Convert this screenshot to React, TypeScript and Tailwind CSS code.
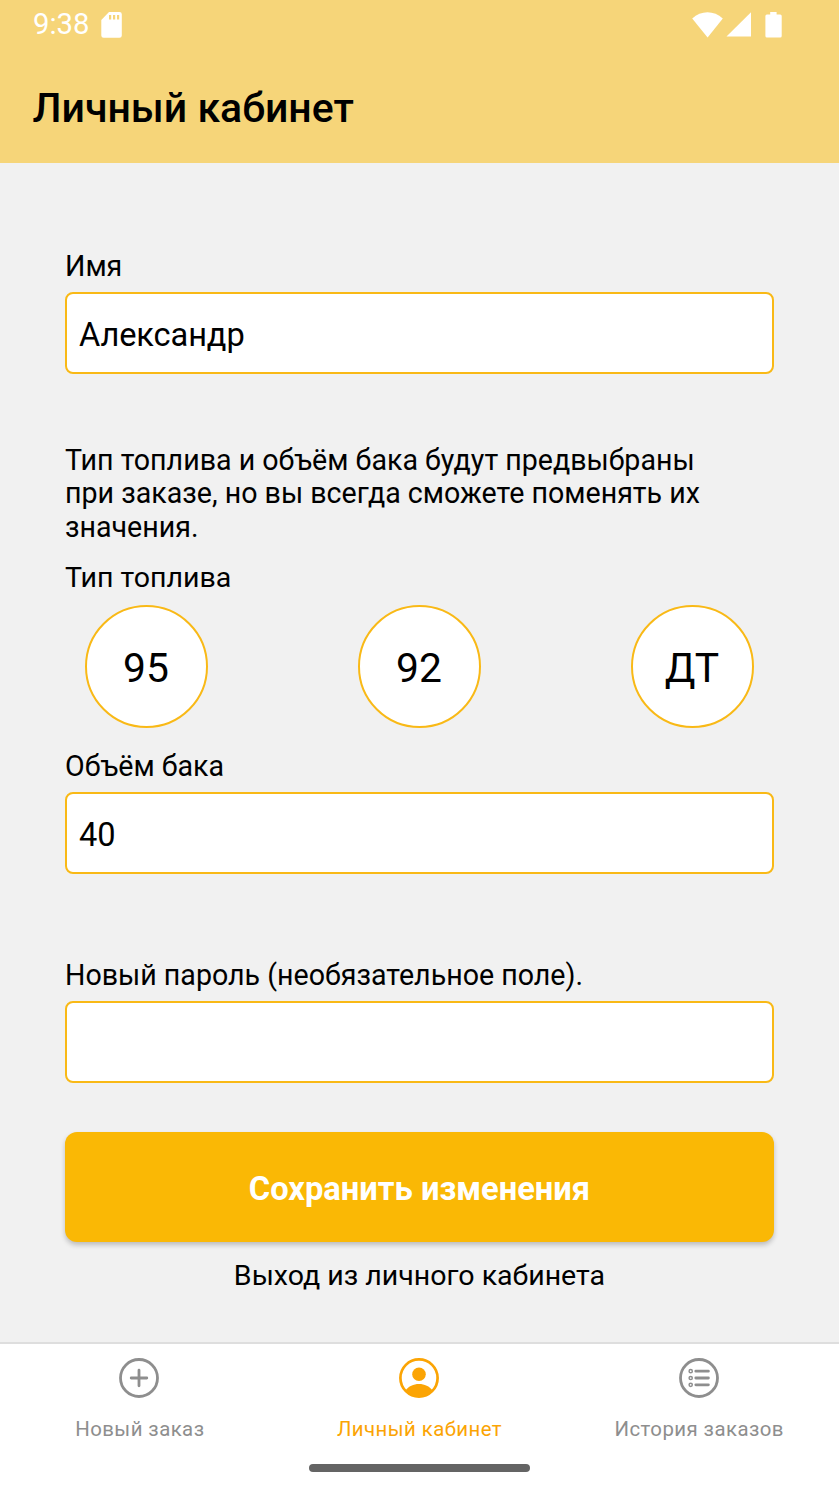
import React from "react";

const inputClass =
  "block h-[81.6px] w-full rounded-[8px] border-2 border-[#f9b916] bg-white px-[12px] pt-[4px] text-[32.6px] tracking-[-0.1px] text-black outline-none";
const labelClass = "block h-[34px] text-[28.6px] leading-[34px]";

function StatusBar() {
  return (
    <div className="flex h-[49px] items-center justify-between pl-[33px] pr-[57.5px] text-white">
      <div className="flex items-center">
        <span className="w-[68px] text-[29.3px] leading-[49px]">9:38</span>
        <svg className="h-[26px] w-[21px]" viewBox="0 0 21 26" fill="currentColor">
          <path
            fillRule="evenodd"
            d="M8 0H18.5A2.3 2.3 0 0 1 20.8 2.3V23.5A2.3 2.3 0 0 1 18.5 25.8H2.6A2.3 2.3 0 0 1 .3 23.5V8ZM8 3V7.6H10.2V3ZM12 3V7.6H14.2V3ZM16 3V7.6H18.2V3Z"
          />
        </svg>
      </div>
      <div className="flex items-center">
        <svg className="h-[26px] w-[31px]" viewBox="0 0 31 26" fill="currentColor">
          <path d="M.2 6.4C9-1.7 22-1.7 30.8 6.4L15.6 25.4Z" />
        </svg>
        <svg className="ml-[3px] h-[26px] w-[26px]" viewBox="0 0 26 26" fill="currentColor">
          <path d="M25 .2V24.6H.5Z" />
        </svg>
        <svg className="ml-[13px] h-[26px] w-[17px]" viewBox="0 0 17 26" fill="currentColor">
          <path d="M5.2 0H11.6V2.4H15.2Q16.7 2.4 16.7 3.9V23.9Q16.7 25.4 15.2 25.4H1.9Q.4 25.4 .4 23.9V3.9Q.4 2.4 1.9 2.4H5.2Z" />
        </svg>
      </div>
    </div>
  );
}

function PlusIcon() {
  return (
    <svg className="-ml-px size-10" viewBox="0 0 40 40" fill="none" stroke="currentColor" strokeLinecap="round">
      <circle cx="20" cy="20" r="18.5" strokeWidth="2.8" />
      <path d="M20 12.2V27.8M12.2 20H27.8" strokeWidth="2.8" />
    </svg>
  );
}

function PersonIcon() {
  return (
    <svg className="size-10" viewBox="0 0 40 40" fill="none">
      <circle cx="20" cy="20" r="18.6" stroke="currentColor" strokeWidth="2.7" />
      <circle cx="20" cy="16.2" r="6.8" fill="currentColor" />
      <path d="M6.5 32.5C9.5 28.5 14.5 26.1 20 26.1S30.5 28.5 33.5 32.5C30 37 25.5 39 20 39S10 37 6.5 32.5Z" fill="currentColor" />
    </svg>
  );
}

function ListIcon() {
  return (
    <svg className="size-10" viewBox="0 0 40 40" fill="none" stroke="currentColor" strokeLinecap="round">
      <circle cx="20" cy="20" r="18.5" strokeWidth="2.8" />
      <path d="M16.8 13.2H29.4M16.8 20H29.4M16.8 26.8H29.4" strokeWidth="2.8" />
      <g strokeWidth="1.5">
        <circle cx="11.7" cy="13.2" r="1.6" />
        <circle cx="11.7" cy="20" r="1.6" />
        <circle cx="11.7" cy="26.8" r="1.6" />
      </g>
    </svg>
  );
}

const tabs = [
  { label: "Новый заказ", Icon: PlusIcon, active: false },
  { label: "Личный кабинет", Icon: PersonIcon, active: true },
  { label: "История заказов", Icon: ListIcon, active: false },
];

export default function App() {
  return (
    <div className="flex h-[1492px] w-[839px] flex-col overflow-hidden bg-[#f1f1f1] font-[Roboto,sans-serif] text-black">
      <header className="h-[163px] shrink-0 bg-[#f6d579]">
        <StatusBar />
        <h1 className="pl-[32.5px] pt-[35px] text-[41px] font-medium leading-[48px]">Личный кабинет</h1>
      </header>

      <main className="flex h-[1179px] shrink-0 flex-col px-[65px] pt-[86px]">
        <label className={labelClass} htmlFor="name">Имя</label>
        <input id="name" className={`${inputClass} mt-[9px]`} defaultValue="Александр" />

        <p className="mt-[70.4px] text-[28.6px] leading-[33.5px]">
          Тип топлива и объём бака будут предвыбраны<br />
          при заказе, но вы всегда сможете поменять их<br />
          значения.
        </p>

        <div className="mt-[17px] h-[34px] text-[28.56px] leading-[34px]">Тип топлива</div>
        <div className="mt-[9.5px] flex justify-between px-[20px]">
          {["95", "92", "ДТ"].map((fuel) => (
            <button
              key={fuel}
              className="flex size-[123px] items-center justify-center rounded-full border-2 border-[#f9b916] bg-white pr-[1px] pt-[3px] text-[40.8px] leading-[48px]"
            >
              {fuel}
            </button>
          ))}
        </div>

        <label className={`${labelClass} mt-[21px]`} htmlFor="volume">Объём бака</label>
        <input id="volume" className={`${inputClass} mt-[9px]`} defaultValue="40" />

        <label className={`${labelClass} mt-[84.9px]`} htmlFor="password">Новый пароль (необязательное поле).</label>
        <input id="password" type="password" className={`${inputClass} mt-[9px]`} />

        <button className="mt-[49px] h-[110px] shrink-0 rounded-[12px] bg-[#fab805] pt-[4px] text-[32.7px] font-bold text-white shadow-[0_3px_5px_rgba(0,0,0,0.22)]">
          Сохранить изменения
        </button>
        <button className="mt-[17px] h-[34px] text-[28.56px] leading-[34px]">Выход из личного кабинета</button>
      </main>

      <nav className="flex h-[150px] shrink-0 flex-col border-t-2 border-[#dedede] bg-white">
        <div className="grid grid-cols-3">
          {tabs.map(({ label, Icon, active }) => (
            <button
              key={label}
              className={`flex flex-col items-center pt-[14px] ${active ? "text-[#fba404]" : "text-[#8e8e8e]"}`}
            >
              <Icon />
              <span className="mt-[19px] text-[20.4px] leading-6 tracking-[0.44px]">{label}</span>
            </button>
          ))}
        </div>
        <div className="mx-auto mt-[23px] h-2 w-[221px] rounded-full bg-[#646464]" />
      </nav>
    </div>
  );
}
